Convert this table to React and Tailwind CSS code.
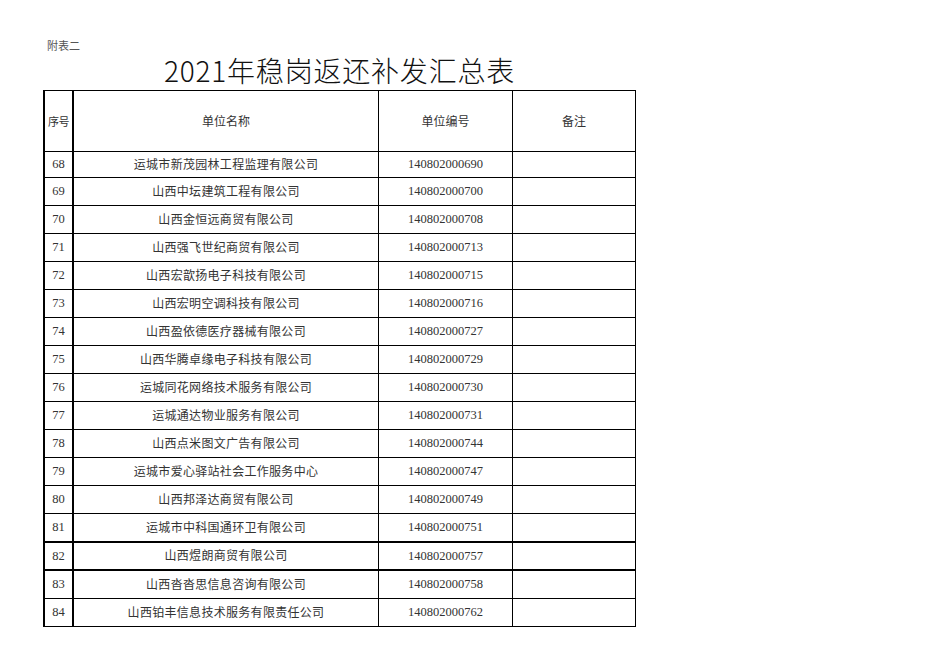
import React from "react";

const rows = [
  ["68", "运城市新茂园林工程监理有限公司", "140802000690"],
  ["69", "山西中坛建筑工程有限公司", "140802000700"],
  ["70", "山西金恒远商贸有限公司", "140802000708"],
  ["71", "山西强飞世纪商贸有限公司", "140802000713"],
  ["72", "山西宏歆扬电子科技有限公司", "140802000715"],
  ["73", "山西宏明空调科技有限公司", "140802000716"],
  ["74", "山西盈依德医疗器械有限公司", "140802000727"],
  ["75", "山西华腾卓缘电子科技有限公司", "140802000729"],
  ["76", "运城同花网络技术服务有限公司", "140802000730"],
  ["77", "运城通达物业服务有限公司", "140802000731"],
  ["78", "山西点米图文广告有限公司", "140802000744"],
  ["79", "运城市爱心驿站社会工作服务中心", "140802000747"],
  ["80", "山西邦泽达商贸有限公司", "140802000749"],
  ["81", "运城市中科国通环卫有限公司", "140802000751"],
  ["82", "山西煜朗商贸有限公司", "140802000757"],
  ["83", "山西沓沓思信息咨询有限公司", "140802000758"],
  ["84", "山西铂丰信息技术服务有限责任公司", "140802000762"],
];

const rowClass = {
  "68": "h-[26px] border-b",
  "81": "h-[29px] border-b-2",
  "82": "h-[28px] border-b-2",
  "84": "h-[27px]",
};

export default function App() {
  return (
    <div className="w-[936px] h-[662px] bg-white pl-[43px] pt-[37px] text-[#333]" style={{ fontFamily: '"Liberation Serif", "Noto Sans CJK SC", serif' }}>
      <div className="w-[593px]">
        <div className="pl-[4px] h-[16px] text-[11px] leading-[16px] text-[#555]" style={{ fontFamily: '"Noto Sans CJK SC", sans-serif' }}>
          附表二
        </div>
        <div className="h-[36px] text-center text-[28px] leading-[34px] tracking-[0.8px] font-light text-[#111]" style={{ fontFamily: '"Noto Sans CJK SC", sans-serif' }}>
          2021年稳岗返还补发汇总表
        </div>
        <div className="border-t border-r border-b border-l-2 border-black box-border mt-[1px]">
          <div className="flex h-[61px] border-b border-black text-[12px]" style={{ fontFamily: '"Noto Sans CJK SC", sans-serif' }}>
            <div className="w-[29px] border-r-2 border-black flex items-center justify-center shrink-0 text-[11px] tracking-[-0.5px]">序号</div>
            <div className="w-[305px] border-r border-black flex items-center justify-center shrink-0">单位名称</div>
            <div className="w-[134px] border-r border-black flex items-center justify-center shrink-0">单位编号</div>
            <div className="flex-1 flex items-center justify-center">备注</div>
          </div>
          {rows.map(([n, name, code]) => (
            <div key={n} className={`flex box-border border-black ${rowClass[n] || "h-[28px] border-b"}`}>
              <div className="w-[29px] border-r-2 border-black flex items-center justify-center shrink-0 text-[12.5px]">{n}</div>
              <div className="w-[305px] border-r border-black flex items-center justify-center shrink-0 text-[12px] tracking-[0.3px]">{name}</div>
              <div className="w-[134px] border-r border-black flex items-center justify-center shrink-0 text-[12.5px]">{code}</div>
              <div className="flex-1"></div>
            </div>
          ))}
        </div>
      </div>
    </div>
  );
}
